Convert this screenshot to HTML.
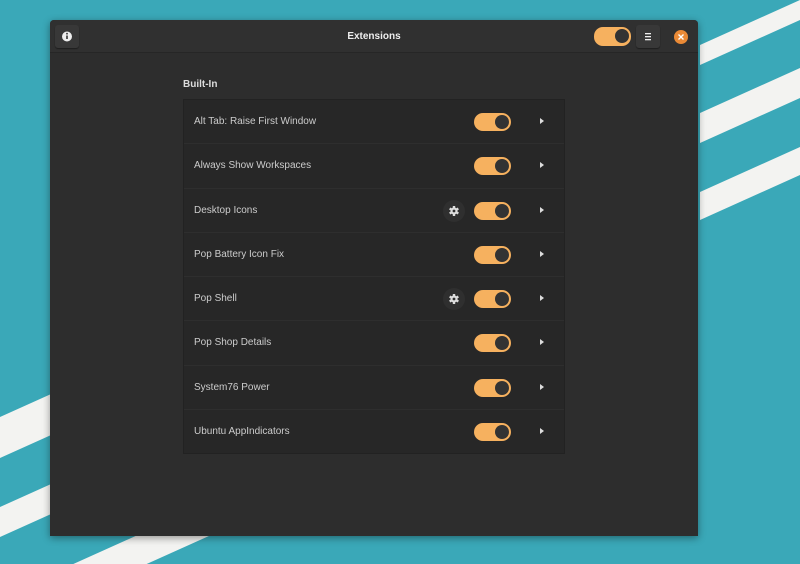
<!DOCTYPE html>
<html><head><style>
*{margin:0;padding:0;box-sizing:border-box}
html,body{width:800px;height:564px;overflow:hidden}
body{background:#3aa8b8;font-family:"Liberation Sans",sans-serif;position:relative}
svg.bg{position:absolute;left:0;top:0}
.win{position:absolute;left:50px;top:20px;width:648px;height:516px;background:#2d2d2d;border-radius:4px 4px 0 0;box-shadow:0 2px 8px rgba(0,0,0,.4)}
.tb{position:absolute;left:0;top:0;width:648px;height:33px;background:#303030;border-bottom:1px solid #262626;border-radius:4px 4px 0 0}
.title{position:absolute;left:0;right:0;top:11px;text-align:center;color:#eee;font-size:10px;font-weight:bold}
.btn{position:absolute;width:24px;height:23px;background:#383838;border-radius:3px;box-shadow:0 1px 1px rgba(0,0,0,.4)}
.tog{position:absolute;width:37px;height:18px;background:#f6b15f;border-radius:9px}
.tog::after{content:"";position:absolute;right:2px;top:2px;width:14px;height:14px;border-radius:50%;background:#333}
.hdr{position:absolute;left:133px;top:59px;color:#ddd;font-size:10px;font-weight:bold}
.list{position:absolute;left:133px;top:79px;width:382px;height:355px;background:#272727;border:1px solid #222}
.row{position:relative;height:44.3px;border-bottom:1px solid #2e2e2e}
.row:last-child{border-bottom:none}
.row span{position:absolute;left:10px;top:16px;color:#ccc;font-size:10px}
.row .tog{left:290px;top:13px}
.arr{position:absolute;left:356px;top:18px;width:0;height:0;border-left:4px solid #ddd;border-top:3.5px solid transparent;border-bottom:3.5px solid transparent}
.gear{position:absolute;left:259px;top:11px;width:22px;height:22px;border-radius:50%;background:#2f2f2f}
</style></head><body>
<svg class="bg" width="800" height="564">
<g fill="#f3f3f1">
<polygon points="700,45 800,0 800,20 700,65"/>
<polygon points="700,113 800,68 800,98 700,143"/>
<polygon points="700,192 800,147 800,175 700,220"/>
<polygon points="0,417 100,372 100,413 0,458"/>
<polygon points="0,507 100,462 100,492 0,537"/>
<polygon points="0,597 300,462 300,495 0,630"/>
</g></svg>
<div class="win">
<div class="tb">
<div class="btn" style="left:5px;top:5px"><svg width="24" height="23"><circle cx="12" cy="11.5" r="5" fill="#eee"/><rect x="11.2" y="10.5" width="1.6" height="3.5" fill="#333"/><circle cx="12" cy="8.7" r=".9" fill="#333"/></svg></div>
<div class="title">Extensions</div>
<div class="tog" style="left:544px;top:7px;height:19px"></div>
<div class="btn" style="left:586px;top:5px"><svg width="24" height="23"><g fill="#eee"><rect x="9" y="8" width="6" height="1.3"/><rect x="9" y="11" width="6" height="1.3"/><rect x="9" y="14" width="6" height="1.3"/></g></svg></div>
<svg style="position:absolute;left:623px;top:9px" width="16" height="16"><circle cx="8" cy="8" r="7" fill="#ea8a36"/><path d="M5.5 5.5L10.5 10.5M10.5 5.5L5.5 10.5" stroke="#fff" stroke-width="1.4"/></svg>
</div>
<div class="hdr">Built-In</div>
<div class="list">
<div class="row"><span>Alt Tab: Raise First Window</span><div class="tog"></div><div class="arr"></div></div>
<div class="row"><span>Always Show Workspaces</span><div class="tog"></div><div class="arr"></div></div>
<div class="row"><span>Desktop Icons</span><div class="gear"><svg width="22" height="22"><g fill="#ddd" transform="translate(11 11)"><circle r="3.6"/><rect x="-1.2" y="-5" width="2.4" height="10"/><rect x="-1.2" y="-5" width="2.4" height="10" transform="rotate(60)"/><rect x="-1.2" y="-5" width="2.4" height="10" transform="rotate(120)"/></g><circle cx="11" cy="11" r="1.4" fill="#2f2f2f"/></svg></div><div class="tog"></div><div class="arr"></div></div>
<div class="row"><span>Pop Battery Icon Fix</span><div class="tog"></div><div class="arr"></div></div>
<div class="row"><span>Pop Shell</span><div class="gear"><svg width="22" height="22"><g fill="#ddd" transform="translate(11 11)"><circle r="3.6"/><rect x="-1.2" y="-5" width="2.4" height="10"/><rect x="-1.2" y="-5" width="2.4" height="10" transform="rotate(60)"/><rect x="-1.2" y="-5" width="2.4" height="10" transform="rotate(120)"/></g><circle cx="11" cy="11" r="1.4" fill="#2f2f2f"/></svg></div><div class="tog"></div><div class="arr"></div></div>
<div class="row"><span>Pop Shop Details</span><div class="tog"></div><div class="arr"></div></div>
<div class="row"><span>System76 Power</span><div class="tog"></div><div class="arr"></div></div>
<div class="row"><span>Ubuntu AppIndicators</span><div class="tog"></div><div class="arr"></div></div>
</div>
</div>
</body></html>
